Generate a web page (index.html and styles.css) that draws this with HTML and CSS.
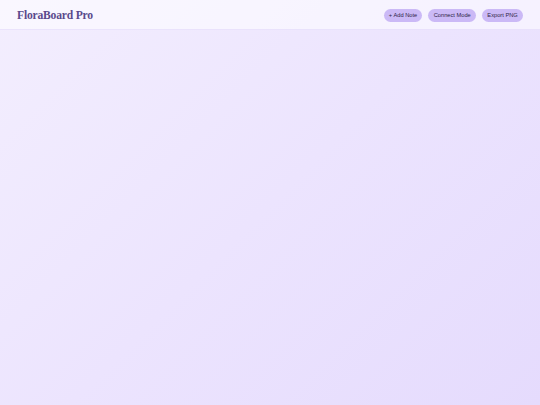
FILE: index.html
```html
<!DOCTYPE html>
<html>
<head>
<meta charset="utf-8">
<link rel="stylesheet" href="styles.css">
</head>
<body>
<header class="topbar">
  <h1 class="brand">FloraBoard Pro</h1>
  <nav class="actions">
    <button class="pill">+ Add Note</button>
    <button class="pill">Connect Mode</button>
    <button class="pill">Export PNG</button>
  </nav>
</header>
<main class="canvas"></main>
</body>
</html>
```
FILE: styles.css
```css
html, body {
  margin: 0;
  padding: 0;
  width: 540px;
  height: 405px;
  overflow: hidden;
}
body {
  background: linear-gradient(135deg, #f3eefe 0%, #ece4fe 50%, #e5dbfd 100%);
  font-family: "Liberation Sans", Arial, sans-serif;
  display: flex;
  flex-direction: column;
}
.topbar {
  height: 30px;
  box-sizing: border-box;
  padding: 1px 17px 0;
  display: flex;
  align-items: center;
  justify-content: space-between;
  background: rgba(255, 255, 255, 0.55);
  border-bottom: 1px solid rgba(220, 208, 250, 0.5);
}
.brand {
  margin: 0;
  font-family: "Liberation Serif", "Times New Roman", serif;
  font-weight: bold;
  font-size: 11.6px;
  letter-spacing: -0.2px;
  color: #5b4a8c;
}
.actions {
  display: flex;
  gap: 6px;
}
.pill {
  border: none;
  border-radius: 7px;
  background: #cbb9f6;
  color: #2d2448;
  font-family: "Liberation Sans", Arial, sans-serif;
  font-size: 5.7px;
  height: 13px;
  padding: 0 5.3px;
  line-height: 13px;
}
.canvas {
  flex: 1;
}
```
